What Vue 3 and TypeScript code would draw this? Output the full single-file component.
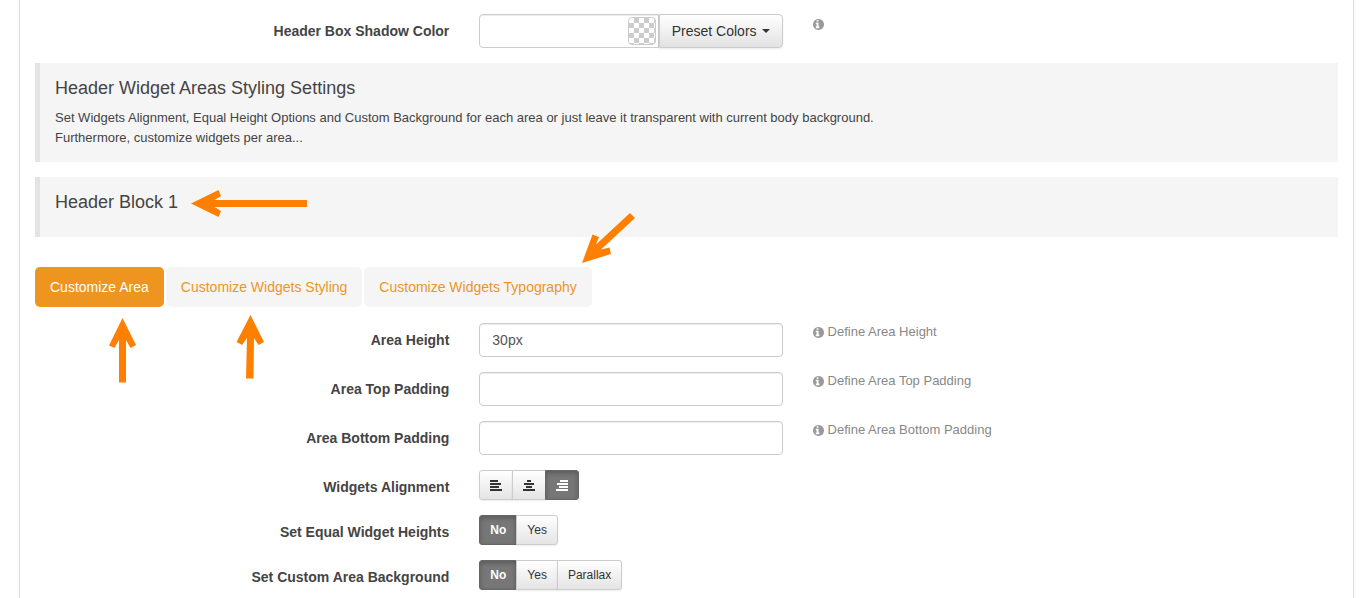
<script setup lang="ts">
import { ref } from 'vue'

type Align = 'left' | 'center' | 'right'

interface TextField {
  id: string
  label: string
  help: string
}

interface ChoiceField {
  id: string
  label: string
  options: string[]
}

const tabs = ['Customize Area', 'Customize Widgets Styling', 'Customize Widgets Typography']
const activeTab = ref(0)

const shadowColor = ref('')

const textFields: TextField[] = [
  { id: 'area-height', label: 'Area Height', help: 'Define Area Height' },
  { id: 'area-top-padding', label: 'Area Top Padding', help: 'Define Area Top Padding' },
  { id: 'area-bottom-padding', label: 'Area Bottom Padding', help: 'Define Area Bottom Padding' },
]
const values = ref<Record<string, string>>({
  'area-height': '30px',
  'area-top-padding': '',
  'area-bottom-padding': '',
})

const alignIcons: Record<Align, string> = {
  left: 'M0 0h8v2H0zM0 3h11v2H0zM0 6h9v2H0zM0 9h12v2H0z',
  center: 'M4 0h4v2H4zM1 3h10v2H1zM3 6h6v2H3zM0 9h12v2H0z',
  right: 'M4 0h8v2H4zM1 3h11v2H1zM3 6h9v2H3zM0 9h12v2H0z',
}
const aligns: Align[] = ['left', 'center', 'right']
const alignment = ref<Align>('right')

const choiceFields: ChoiceField[] = [
  { id: 'equal-heights', label: 'Set Equal Widget Heights', options: ['No', 'Yes'] },
  { id: 'custom-background', label: 'Set Custom Area Background', options: ['No', 'Yes', 'Parallax'] },
]
const choices = ref<Record<string, string>>({ 'equal-heights': 'No', 'custom-background': 'No' })

const infoPath =
  'M1024 1376v-160q0-14-9-23t-23-9h-96v-512q0-14-9-23t-23-9h-320q-14 0-23 9t-9 23v160q0 14 9 23t23 9h96v320h-96q-14 0-23 9t-9 23v160q0 14 9 23t23 9h448q14 0 23-9t9-23zM896 480v-160q0-14-9-23t-23-9h-192q-14 0-23 9t-9 23v160q0 14 9 23t23 9h192q14 0 23-9t9-23zM1664 896q0 209-103 385.5T1281.5 1561 896 1664t-385.5-103T231 1281.5 128 896t103-385.5T510.5 231 896 128t385.5 103T1561 510.5 1664 896z'

const arrows = [
  '191,203.5 218.5,190 221,196 214.5,200 307,200 307,207 214.5,207 221,211 218.5,217',
  '122.5,318 136,345 130.5,348 126,340 126,382.5 119,382.5 119,340 114.5,348 109,345.5',
  '250.5,315 264,342 258.5,345 254,338 253.5,378.5 246,378.5 247,338 242,345 236.5,342',
  '582,263 592.5,234.5 599,237 596,244.5 630,213 635,218 601,249.5 609.5,247.5 611,254',
]
</script>

<template>
  <div class="page">
    <main class="panel">
      <div class="row">
        <label class="label" for="shadow-color">Header Box Shadow Color</label>
        <div class="color-group">
          <input id="shadow-color" v-model="shadowColor" class="input color-input" type="text" />
          <span class="swatch" aria-hidden="true"></span>
          <button class="preset" type="button">Preset Colors<span class="caret"></span></button>
        </div>
        <p class="help">
          <svg class="info" viewBox="128 128 1536 1536" aria-hidden="true"><path :d="infoPath" /></svg>
        </p>
      </div>

      <section class="callout">
        <h2>Header Widget Areas Styling Settings</h2>
        <p>
          Set Widgets Alignment, Equal Height Options and Custom Background for each area or just leave it
          transparent with current body background.<br />Furthermore, customize widgets per area...
        </p>
      </section>

      <section class="callout block">
        <h2>Header Block 1</h2>
      </section>

      <nav class="tabs">
        <a
          v-for="(tab, i) in tabs"
          :key="tab"
          href="#"
          class="tab"
          :class="{ active: i === activeTab }"
          @click.prevent="activeTab = i"
        >{{ tab }}</a>
      </nav>

      <div v-for="field in textFields" :key="field.id" class="row">
        <label class="label" :for="field.id">{{ field.label }}</label>
        <input :id="field.id" v-model="values[field.id]" class="input" type="text" />
        <p class="help">
          <svg class="info" viewBox="128 128 1536 1536" aria-hidden="true"><path :d="infoPath" /></svg>
          <span>{{ field.help }}</span>
        </p>
      </div>

      <div class="row">
        <span id="alignment-label" class="label">Widgets Alignment</span>
        <div class="btn-group" role="group" aria-labelledby="alignment-label">
          <button
            v-for="a in aligns"
            :key="a"
            type="button"
            class="btn"
            :class="{ on: a === alignment }"
            :aria-label="a"
            :aria-pressed="a === alignment"
            @click="alignment = a"
          >
            <svg class="align" viewBox="0 0 12 11" shape-rendering="crispEdges"><path :d="alignIcons[a]" /></svg>
          </button>
        </div>
      </div>

      <div v-for="field in choiceFields" :key="field.id" class="row">
        <span :id="field.id" class="label">{{ field.label }}</span>
        <div class="btn-group" role="group" :aria-labelledby="field.id">
          <button
            v-for="option in field.options"
            :key="option"
            type="button"
            class="btn"
            :class="{ on: choices[field.id] === option }"
            :aria-pressed="choices[field.id] === option"
            @click="choices[field.id] = option"
          >{{ option }}</button>
        </div>
      </div>
    </main>

    <svg class="arrows" width="660" height="400" viewBox="0 0 660 400" aria-hidden="true">
      <polygon v-for="points in arrows" :key="points" :points="points" />
    </svg>
  </div>
</template>

<style>
body {
  margin: 0;
  background: #fff;
}
</style>

<style scoped>
.page {
  position: relative;
  box-sizing: border-box;
  min-height: 100vh;
  padding: 0 17px 0 19px;
  display: flex;
  font-family: "Liberation Sans", Arial, sans-serif;
  font-size: 14px;
  line-height: 20px;
  color: #444;
}
.page * {
  box-sizing: border-box;
}
.panel {
  flex: 1;
  min-width: 0;
  padding: 14px 0 0;
  border: solid #ddd;
  border-width: 0 1px;
  box-shadow: 0 1px 2px rgba(0, 0, 0, 0.08);
}
.row {
  display: grid;
  grid-template-columns: 4fr 3fr 5fr;
  margin-bottom: 15px;
}
.row:last-child {
  margin-bottom: 8px;
}
.row > * {
  margin: 0 15px;
  min-width: 0;
}
.label {
  padding-top: 7px;
  text-align: right;
  font-weight: bold;
}
.input {
  height: 34px;
  padding: 6px 12px;
  border: 1px solid #ccc;
  border-radius: 4px;
  background: #fff;
  color: #555;
  font: inherit;
  box-shadow: inset 0 1px 1px rgba(0, 0, 0, 0.075);
}
.color-group {
  display: flex;
}
.color-input {
  flex: 1;
  min-width: 0;
  border-radius: 4px 0 0 4px;
}
.swatch {
  flex: none;
  width: 28px;
  height: 28px;
  margin: 3px 3px 0 -31px;
  border: 1px solid #ccc;
  border-radius: 4px;
  background: repeating-conic-gradient(#ccc 0 25%, #fff 0 50%) 0 0 / 10px 10px;
}
.preset {
  display: flex;
  align-items: center;
  gap: 5px;
  height: 34px;
  padding: 0 12px;
  border: 1px solid #ccc;
  border-radius: 0 4px 4px 0;
  background: linear-gradient(#fff, #e2e2e2);
  box-shadow: 0 1px 2px rgba(0, 0, 0, 0.08);
  color: #333;
  font: inherit;
  white-space: nowrap;
}
.caret {
  border: 4px solid transparent;
  border-top-color: #333;
  border-bottom: 0;
}
.help {
  display: flex;
  align-items: center;
  gap: 4px;
  height: 18px;
  font-size: 13px;
  color: #888;
}
.row:first-child .help {
  height: 20px;
}
.info {
  width: 11px;
  height: 11px;
  fill: #999;
}
.callout {
  margin: 0 15px 15px;
  padding: 15px 15px 14px;
  border-left: 5px solid #e3e3e3;
  background: #f5f5f5;
}
.callout.block {
  padding-bottom: 15px;
}
.callout h2 {
  margin: 0 0 10px;
  font-size: 18px;
  line-height: 20px;
  font-weight: normal;
}
.callout p {
  margin: 0;
  font-size: 13px;
}
.tabs {
  display: flex;
  gap: 2px;
  margin: 30px 15px 16px;
}
.tab {
  padding: 10px 15px;
  border-radius: 5px;
  background: #f5f5f5;
  color: #ed951e;
  text-decoration: none;
  white-space: nowrap;
}
.tab.active {
  background: #ed951e;
  color: #fff;
}
.btn-group {
  display: flex;
  height: 30px;
}
.btn {
  padding: 0 10px;
  border: 1px solid #ccc;
  background: linear-gradient(#fff, #e4e4e4);
  box-shadow: 0 1px 2px rgba(0, 0, 0, 0.08);
  color: #333;
  font: inherit;
  font-size: 12px;
  white-space: nowrap;
}
.btn + .btn {
  margin-left: -1px;
}
.btn:first-child {
  border-radius: 3px 0 0 3px;
}
.btn:last-child {
  border-radius: 0 3px 3px 0;
}
.btn.on {
  border-color: #666;
  background: #777;
  box-shadow: inset 0 2px 5px rgba(0, 0, 0, 0.25);
  color: #fff;
  font-weight: bold;
}
.align {
  display: block;
  width: 12px;
  height: 11px;
  fill: currentColor;
}
.arrows {
  position: absolute;
  top: 0;
  left: 0;
  fill: #ff8000;
  pointer-events: none;
}
</style>
